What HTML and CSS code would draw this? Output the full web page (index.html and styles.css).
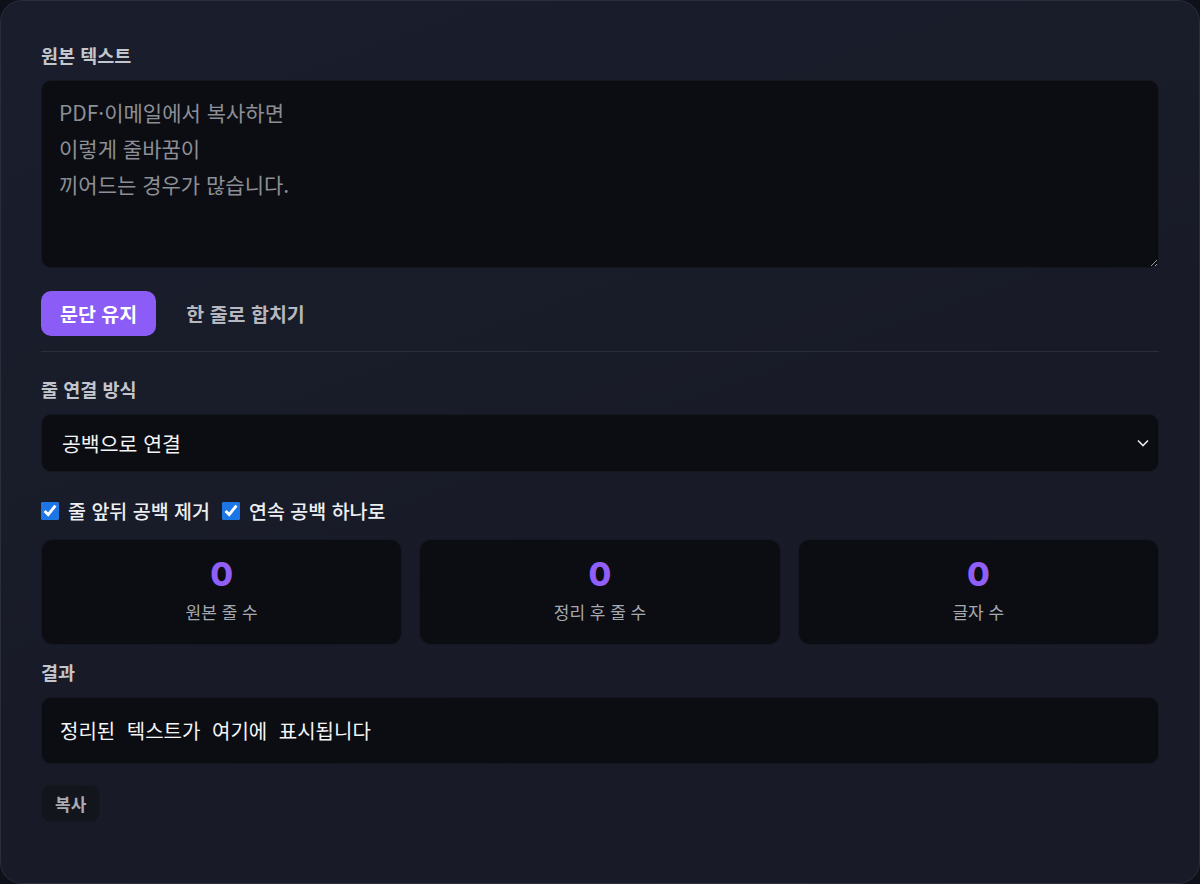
FILE: index.html
```html
<!DOCTYPE html>
<html lang="ko">
   <head>
      <meta charset="UTF-8">
      <meta name="viewport" content="width=device-width, initial-scale=1.0"/>
      <title>줄바꿈 정리</title>
      <link rel="stylesheet" href="styles.css">
   </head>
   <body>
      <div class="card">
         <label class="field-label" for="source">원본 텍스트</label>
         <textarea id="source" class="source" placeholder="PDF·이메일에서 복사하면&#10;이렇게 줄바꿈이&#10;끼어드는 경우가 많습니다."></textarea>

         <div class="modes">
            <button class="mode active">문단 유지</button>
            <button class="mode">한 줄로 합치기</button>
         </div>

         <hr class="divider">

         <label class="field-label" for="joiner">줄 연결 방식</label>
         <div class="select-wrap">
            <select id="joiner" class="joiner">
               <option>공백으로 연결</option>
               <option>바로 붙이기</option>
            </select>
            <svg class="chevron" width="14" height="10" viewBox="0 0 14 10">
               <path d="M2 2.5 L7 7.5 L12 2.5" fill="none" stroke="#e6e7ea" stroke-width="1.6"/>
            </svg>
         </div>

         <div class="options">
            <label class="option"><input type="checkbox" checked> 줄 앞뒤 공백 제거</label>
            <label class="option"><input type="checkbox" checked> 연속 공백 하나로</label>
         </div>

         <div class="stats">
            <div class="stat">
               <div class="stat-value" id="src-lines">0</div>
               <div class="stat-name">원본 줄 수</div>
            </div>
            <div class="stat">
               <div class="stat-value" id="out-lines">0</div>
               <div class="stat-name">정리 후 줄 수</div>
            </div>
            <div class="stat">
               <div class="stat-value" id="chars">0</div>
               <div class="stat-name">글자 수</div>
            </div>
         </div>

         <div class="field-label">결과</div>
         <div class="result" id="result">정리된 텍스트가 여기에 표시됩니다</div>

         <button class="copy">복사</button>
      </div>
   </body>
</html>
```

FILE: styles.css
```css
*
{
   box-sizing: border-box;
}

body
{
   margin: 0;
   background: #0f111a;
   font-family: "Noto Sans CJK KR", "Noto Sans", sans-serif;
   color: #e8e9ec;
}

.card
{
   height: 884px;
   padding: 42px 40px 0 40px;
   border: 1px solid #2a2d3b;
   border-radius: 22px;
   background: linear-gradient(160deg, #1a1d2c 0%, #181b27 55%, #191a27 100%);
   display: flex;
   flex-direction: column;
}

.field-label
{
   display: block;
   font-size: 18.5px;
   font-weight: 700;
   line-height: 24px;
   color: #c3c6cd;
   margin-bottom: 13px;
}

.source
{
   display: block;
   width: 100%;
   height: 188px;
   padding: 13px 17px;
   border: 1px solid #151720;
   border-radius: 10px;
   background: #0c0d12;
   color: #e8e9ec;
   font-family: inherit;
   font-size: 21px;
   line-height: 36px;
   resize: vertical;
   outline: none;
}

.source::placeholder
{
   color: #8c8f96;
}

.modes
{
   display: flex;
   gap: 10px;
   margin-top: 23px;
}

.mode
{
   height: 45px;
   padding: 0 20px;
   border: none;
   border-radius: 10px;
   background: transparent;
   color: #b5b8bf;
   font-family: inherit;
   font-size: 19.5px;
   font-weight: 700;
}

.mode.active
{
   background: #8b5cf6;
   color: #ffffff;
   padding: 0 19px;
}

.divider
{
   width: 100%;
   margin: 15px 0 25px 0;
   border: none;
   border-top: 1px solid #2a2d3a;
}

.select-wrap
{
   position: relative;
}

.joiner
{
   display: block;
   width: 100%;
   height: 58px;
   padding: 0 20px;
   border: 1px solid #151720;
   border-radius: 10px;
   background: #0c0d12;
   color: #f2f3f5;
   font-family: inherit;
   font-size: 20.5px;
   -webkit-appearance: none;
   appearance: none;
   outline: none;
}

.chevron
{
   position: absolute;
   right: 9px;
   top: 24px;
   pointer-events: none;
}

.options
{
   display: flex;
   gap: 12px;
   margin-top: 27px;
}

.option
{
   display: flex;
   align-items: center;
   gap: 9px;
   font-size: 19.5px;
   font-weight: 500;
   line-height: 24px;
   color: #eceef1;
}

.option input
{
   width: 18px;
   height: 18px;
   margin: 0;
   accent-color: #1d76e6;
}

.stats
{
   display: grid;
   grid-template-columns: 1fr 1fr 1fr;
   gap: 17px;
   margin-top: 16px;
}

.stat
{
   height: 106px;
   padding-top: 14px;
   border: 1px solid #151720;
   border-radius: 12px;
   background: #0c0d12;
   text-align: center;
}

.stat-value
{
   font-family: "Inter", "Liberation Sans", sans-serif;
   font-size: 33px;
   font-weight: 800;
   line-height: 40px;
   color: #8f5ff7;
}

.stat-name
{
   margin-top: 6px;
   font-size: 17px;
   line-height: 24px;
   color: #a6a9b0;
}

.stats + .field-label
{
   margin-top: 15px;
}

.result
{
   height: 67px;
   padding: 0 18px;
   border: 1px solid #151720;
   border-radius: 10px;
   background: #0c0d12;
   display: flex;
   align-items: center;
   font-size: 20px;
   word-spacing: 6px;
   color: #f4f5f7;
}

.copy
{
   align-self: flex-start;
   height: 37px;
   margin-top: 21px;
   padding: 0 13px;
   border: 1px solid #171920;
   border-radius: 9px;
   background: #13151d;
   color: #a9acb3;
   font-family: inherit;
   font-size: 17px;
   font-weight: 700;
}
```
